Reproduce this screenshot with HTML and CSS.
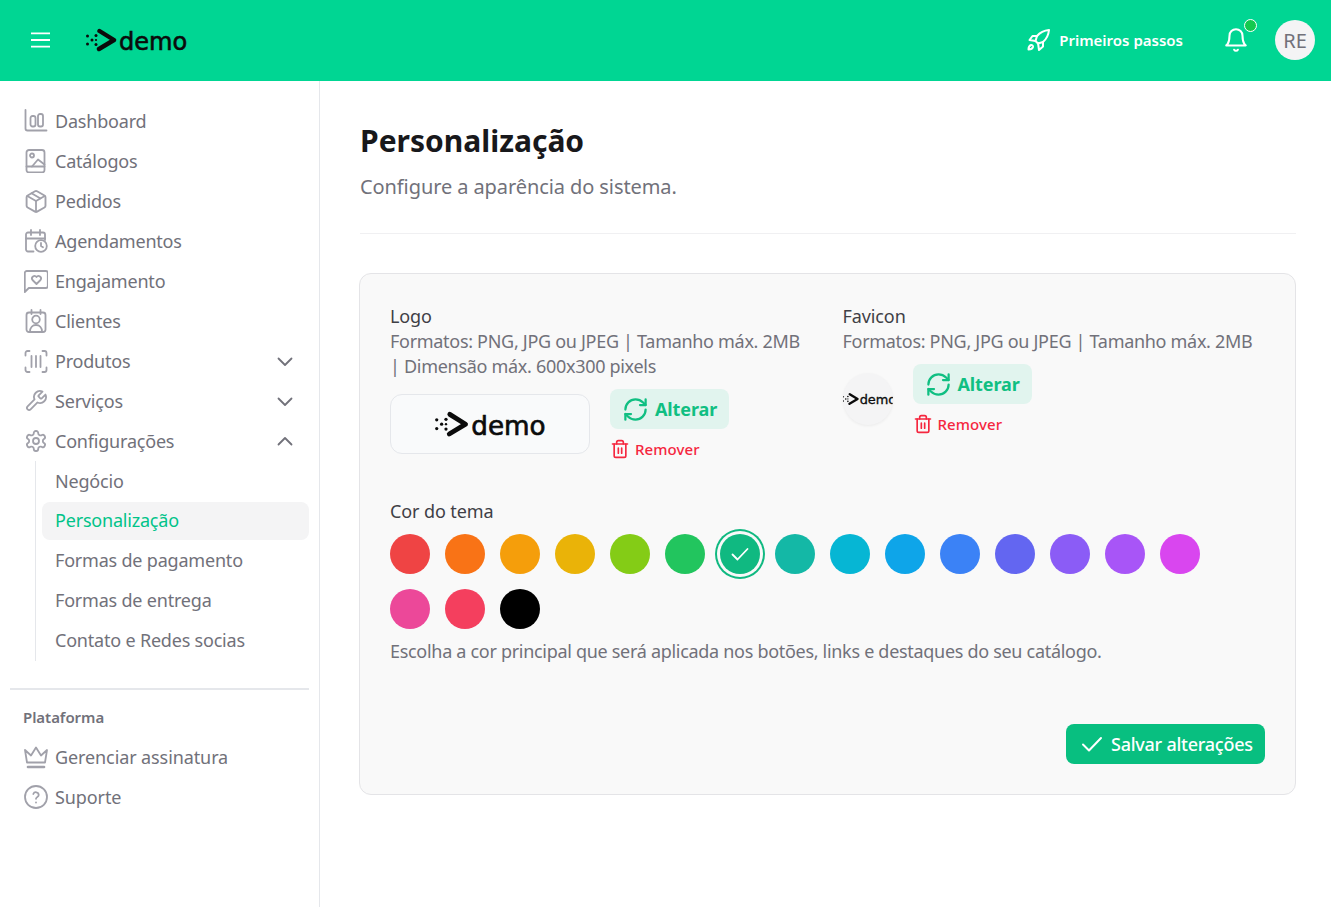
FILE: index.html
```html
<!DOCTYPE html>
<html lang="pt-BR">
<head>
<meta charset="utf-8">
<title>Personalização</title>
<link rel="stylesheet" href="styles.css">
</head>
<body>
<header class="topbar">
  <div class="top-left">
    <svg class="burger" viewBox="0 0 20 16"><path d="M0 1h20M0 8h20M0 15h20"/></svg>
    <span class="logo logo-head">
      <svg class="mark" viewBox="0 0 32 26"><g class="dots"><circle cx="2.500" cy="9" r="1.500"/><circle cx="2.500" cy="17" r="1.500"/><circle cx="7" cy="13" r="1.500"/><circle cx="11" cy="8.500" r="1.500"/><circle cx="11" cy="17.500" r="1.500"/><circle cx="11" cy="13" r="1.100"/></g><path class="chev" d="M14.500 4L29 13 14 22"/></svg><span class="word">demo</span>
    </span>
  </div>
  <div class="top-right">
    <a class="steps">
      <svg class="ic-rocket" viewBox="0 0 24 24"><path d="M22 2c-5 .5-9 2.500-12 6l-1.500 5 2.500 2.500 5-1.500c3.500-3 5.500-7 6-12z"/><path d="M10 8H5.500L2.500 12l6 1"/><path d="M16 14v4.500L12 22l-1-7"/><path d="M4 17c-1.500.5-2.500 2-2.500 4.500 2.500 0 4-1 4.500-2.500.3-1.200-1-2.300-2-2z"/></svg>
      <span>Primeiros passos</span>
    </a>
    <span class="bell">
      <svg class="ic-bell" viewBox="0 0 24 24"><path d="M6 8a6 6 0 0 1 12 0c0 7 3 9 3 9H3s3-2 3-9"/><path d="M10.300 21a1.940 1.940 0 0 0 3.400 0"/></svg>
      <i class="dot"></i>
    </span>
    <span class="avatar">RE</span>
  </div>
</header>

<div class="shell">
  <aside class="sidebar">
    <nav class="nav">
      <a class="item"><svg class="ic" viewBox="0 0 24 24"><path d="M1.500 1v18.500a2 2 0 0 0 2 2H22.500"/><rect x="6.500" y="7" width="5" height="10.500" rx="2"/><rect x="14" y="5" width="5" height="12.500" rx="2"/></svg><span>Dashboard</span></a>
      <a class="item"><svg class="ic" viewBox="0 0 24 24"><rect x="2.500" y="1" width="18" height="22.500" rx="2.500"/><circle cx="8" cy="6.500" r="2"/><path d="M2.500 17.500h18"/><path d="M8 17.500l6-7 6.500 5"/></svg><span>Catálogos</span></a>
      <a class="item"><svg class="ic" viewBox="0 0 24 24"><path d="M21 8a2 2 0 0 0-1-1.730l-7-4a2 2 0 0 0-2 0l-7 4A2 2 0 0 0 3 8v8a2 2 0 0 0 1 1.730l7 4a2 2 0 0 0 2 0l7-4A2 2 0 0 0 21 16Z" transform="translate(-12 -12) scale(1.050) translate(10.900 11.300)"/><path d="m3.300 7 8.700 5 8.700-5"/><path d="M12 22V12"/><path d="m7.500 4.270 9 5.150"/></svg><span>Pedidos</span></a>
      <a class="item"><svg class="ic" viewBox="0 0 24 24"><path d="M9.500 22.500H4a2 2 0 0 1-2-2V5.500a2 2 0 0 1 2-2h15a2 2 0 0 1 2 2V11"/><path d="M7 1v5M16 1v5M2 9.500h19"/><circle cx="17" cy="17" r="5.800"/><path d="M17 14v3l2 1.300"/></svg><span>Agendamentos</span></a>
      <a class="item"><svg class="ic" viewBox="0 0 24 24"><path d="M.8 23V4a2 2 0 0 1 2-2h19a2 2 0 0 1 2 2v13a2 2 0 0 1-2 2H4.800z"/><path d="M12.500 15l-4-4a2.400 2.400 0 0 1 4-3 2.400 2.400 0 0 1 4 3z"/></svg><span>Engajamento</span></a>
      <a class="item"><svg class="ic" viewBox="0 0 24 24"><rect x="2.500" y="3.500" width="19" height="19.500" rx="2.500"/><path d="M7.500 1v4M16.500 1v4"/><circle cx="12" cy="10.500" r="3.800"/><path d="M6 22.500c0-4 2.500-6.500 6-6.500s6 2.500 6 6.500"/></svg><span>Clientes</span></a>
      <a class="item"><svg class="ic" viewBox="0 0 24 24"><path d="M1.500 6.500V4a2 2 0 0 1 2-2h2M18.500 2h2a2 2 0 0 1 2 2v2.500M22.500 18.500V21a2 2 0 0 1-2 2h-2M5.500 23h-2a2 2 0 0 1-2-2v-2.500"/><path d="M7.500 7v11M12 7v11M16.500 7v11"/></svg><span>Produtos</span><svg class="chev-ic down" viewBox="0 0 16 10"><path d="M1.500 1.500L8 8l6.500-6.500"/></svg></a>
      <a class="item"><svg class="ic" viewBox="0 0 24 24"><path d="M14.700 6.300a1 1 0 0 0 0 1.400l1.600 1.600a1 1 0 0 0 1.400 0l3.770-3.770a6 6 0 0 1-7.940 7.940l-6.910 6.910a2.120 2.120 0 0 1-3-3l6.910-6.910a6 6 0 0 1 7.940-7.940l-3.760 3.760z"/></svg><span>Serviços</span><svg class="chev-ic down" viewBox="0 0 16 10"><path d="M1.500 1.500L8 8l6.500-6.500"/></svg></a>
      <a class="item"><svg class="ic" viewBox="0 0 24 24"><path d="M12.220 2h-.44a2 2 0 0 0-2 2v.18a2 2 0 0 1-1 1.730l-.43.25a2 2 0 0 1-2 0l-.15-.08a2 2 0 0 0-2.730.73l-.22.38a2 2 0 0 0 .73 2.730l.15.1a2 2 0 0 1 1 1.720v.51a2 2 0 0 1-1 1.740l-.15.09a2 2 0 0 0-.73 2.730l.22.38a2 2 0 0 0 2.730.73l.15-.08a2 2 0 0 1 2 0l.43.25a2 2 0 0 1 1 1.730V20a2 2 0 0 0 2 2h.44a2 2 0 0 0 2-2v-.18a2 2 0 0 1 1-1.730l.43-.25a2 2 0 0 1 2 0l.15.08a2 2 0 0 0 2.730-.73l.22-.39a2 2 0 0 0-.73-2.730l-.15-.08a2 2 0 0 1-1-1.740v-.5a2 2 0 0 1 1-1.740l.15-.09a2 2 0 0 0 .73-2.730l-.22-.38a2 2 0 0 0-2.730-.73l-.15.08a2 2 0 0 1-2 0l-.43-.25a2 2 0 0 1-1-1.730V4a2 2 0 0 0-2-2z"/><circle cx="12" cy="12" r="3"/></svg><span>Configurações</span><svg class="chev-ic" viewBox="0 0 16 10"><path d="M1.500 8.500L8 2l6.500 6.500"/></svg></a>
      <div class="sub">
        <a class="sub-item">Negócio</a>
        <a class="sub-item active">Personalização</a>
        <a class="sub-item">Formas de pagamento</a>
        <a class="sub-item">Formas de entrega</a>
        <a class="sub-item">Contato e Redes socias</a>
      </div>
    </nav>
    <hr class="side-rule">
    <p class="side-title">Plataforma</p>
    <nav class="nav">
      <a class="item"><svg class="ic" viewBox="0 0 24 24"><path d="M1 5l6 5.500L12 2.500l5 8L23 5l-2 12.500H3z"/><path d="M4 22h16" class="thick"/></svg><span>Gerenciar assinatura</span></a>
      <a class="item"><svg class="ic" viewBox="0 0 24 24"><circle cx="12" cy="12" r="11"/><path d="M9.300 9a2.800 2.800 0 0 1 5.400.9c0 1.900-2.700 2.500-2.700 3.900"/><path d="M12 17.500h.01"/></svg><span>Suporte</span></a>
    </nav>
  </aside>

  <main class="main">
    <h1 class="title">Personalização</h1>
    <p class="subtitle">Configure a aparência do sistema.</p>
    <hr class="main-rule">

    <section class="card">
      <div class="uploads">
        <div class="upload">
          <h2 class="label">Logo</h2>
          <p class="hint">Formatos: PNG, JPG ou JPEG | Tamanho máx. 2MB | Dimensão máx. 600x300 pixels</p>
          <div class="upload-row">
            <div class="logo-box">
              <span class="logo logo-card">
                <svg class="mark" viewBox="0 0 32 26"><g class="dots"><circle cx="2.500" cy="9" r="1.500"/><circle cx="2.500" cy="17" r="1.500"/><circle cx="7" cy="13" r="1.500"/><circle cx="11" cy="8.500" r="1.500"/><circle cx="11" cy="17.500" r="1.500"/><circle cx="11" cy="13" r="1.100"/></g><path class="chev" d="M14.500 4L29 13 14 22"/></svg><span class="word">demo</span>
              </span>
            </div>
            <div class="actions">
              <button class="btn-alt"><svg class="ic-refresh" viewBox="0 0 24 24"><path d="M3 12a9 9 0 0 1 9-9 9.750 9.750 0 0 1 6.740 2.740L21 8"/><path d="M21 3v5h-5"/><path d="M21 12a9 9 0 0 1-9 9 9.750 9.750 0 0 1-6.740-2.740L3 16"/><path d="M8 16H3v5"/></svg>Alterar</button>
              <button class="btn-rem"><svg class="ic-20" viewBox="0 0 24 24"><path d="M3 6h18"/><path d="M19 6v14a2 2 0 0 1-2 2H7a2 2 0 0 1-2-2V6"/><path d="M8 6V4c0-1 1-2 2-2h4c1 0 2 1 2 2v2"/><path d="M10 11v6M14 11v6"/></svg>Remover</button>
            </div>
          </div>
        </div>
        <div class="upload">
          <h2 class="label">Favicon</h2>
          <p class="hint">Formatos: PNG, JPG ou JPEG | Tamanho máx. 2MB</p>
          <div class="upload-row">
            <div class="fav-box">
              <span class="logo logo-fav">
                <svg class="mark" viewBox="0 0 32 26"><g class="dots"><circle cx="2.500" cy="9" r="1.500"/><circle cx="2.500" cy="17" r="1.500"/><circle cx="7" cy="13" r="1.500"/><circle cx="11" cy="8.500" r="1.500"/><circle cx="11" cy="17.500" r="1.500"/><circle cx="11" cy="13" r="1.100"/></g><path class="chev" d="M14.500 4L29 13 14 22"/></svg><span class="word">demo</span>
              </span>
            </div>
            <div class="actions">
              <button class="btn-alt"><svg class="ic-refresh" viewBox="0 0 24 24"><path d="M3 12a9 9 0 0 1 9-9 9.750 9.750 0 0 1 6.740 2.740L21 8"/><path d="M21 3v5h-5"/><path d="M21 12a9 9 0 0 1-9 9 9.750 9.750 0 0 1-6.740-2.740L3 16"/><path d="M8 16H3v5"/></svg>Alterar</button>
              <button class="btn-rem"><svg class="ic-20" viewBox="0 0 24 24"><path d="M3 6h18"/><path d="M19 6v14a2 2 0 0 1-2 2H7a2 2 0 0 1-2-2V6"/><path d="M8 6V4c0-1 1-2 2-2h4c1 0 2 1 2 2v2"/><path d="M10 11v6M14 11v6"/></svg>Remover</button>
            </div>
          </div>
        </div>
      </div>

      <h2 class="label theme-label">Cor do tema</h2>
      <div class="swatches">
        <span class="sw c1"></span><span class="sw c2"></span><span class="sw c3"></span><span class="sw c4"></span><span class="sw c5"></span><span class="sw c6"></span>
        <span class="sw c7 selected"><svg viewBox="0 0 20 20"><path d="M2.500 10.500l5 5L17.500 5"/></svg></span>
        <span class="sw c8"></span><span class="sw c9"></span><span class="sw c10"></span><span class="sw c11"></span><span class="sw c12"></span><span class="sw c13"></span><span class="sw c14"></span><span class="sw c15"></span><span class="sw c16"></span><span class="sw c17"></span><span class="sw c18"></span>
      </div>
      <p class="hint theme-hint">Escolha a cor principal que será aplicada nos botões, links e destaques do seu catálogo.</p>

      <div class="save-row">
        <button class="btn-save"><svg class="ic-24" viewBox="0 0 24 24"><path d="M3 12.500l6 6L21 6"/></svg>Salvar alterações</button>
      </div>
    </section>
  </main>
</div>
</body>
</html>
```
FILE: styles.css
```css
* { box-sizing: border-box; }
html, body { margin: 0; height: 100%; }
body {
  font-family: "Noto Sans", "Open Sans", sans-serif;
  font-size: 18px;
  line-height: 25px;
  color: #71717a;
  background: #fff;
  overflow: hidden;
}
svg { fill: none; stroke: currentColor; stroke-linecap: round; stroke-linejoin: round; flex: none; display: block; }
p, h1, h2 { margin: 0; }
button { font: inherit; border: 0; background: none; padding: 0; }

.topbar {
  height: 81px;
  background: #00d693;
  display: flex;
  align-items: center;
  justify-content: space-between;
  padding: 0 16px 1px 31px;
  color: #fff;
}
.top-left { display: flex; align-items: center; gap: 35px; }
.burger { width: 19px; height: 16px; stroke-width: 2; }
.top-right { display: flex; align-items: center; }
.steps { display: flex; align-items: center; gap: 8px; font-size: 15px; font-weight: 600; margin-right: 40px; }
.ic-rocket { width: 24px; height: 24px; stroke-width: 2; }
.ic-bell { width: 26px; height: 26px; stroke-width: 1.9; }
.ic-24 { width: 24px; height: 24px; stroke-width: 2; }
.ic-20 { width: 20px; height: 20px; stroke-width: 2; }
.ic-refresh { width: 27px; height: 27px; stroke-width: 2; }
.bell { position: relative; display: block; margin-right: 26px; }
.dot {
  position: absolute; top: -8px; right: -8px;
  width: 13px; height: 13px; border-radius: 50%;
  background: #14c94f; border: 1.5px solid #fff;
}
.avatar {
  width: 40px; height: 40px; border-radius: 50%;
  background: #f4f4f5; color: #71717a;
  display: flex; align-items: center; justify-content: center;
  font-size: 20px;
}

.logo { display: inline-flex; align-items: center; color: #0b0b0b; white-space: nowrap; }
.mark { width: 1.143em; height: .929em; }
.mark .dots { fill: currentColor; stroke: none; }
.mark .chev { stroke-width: 4.4; }
.word {
  font-family: "DejaVu Sans", "Noto Sans", sans-serif;
  font-size: .86em; line-height: 1;
  margin: .17em 0 0 .08em;
  -webkit-text-stroke: .025em currentColor;
}
.logo-head { font-size: 28px; }
.logo-card { font-size: 30.500px; }
.logo-fav { font-size: 15px; margin-left: -1px; }

.shell { display: flex; height: calc(100vh - 81px); }
.sidebar {
  width: 320px; flex: none;
  border-right: 1px solid #e5e7eb;
  padding: 20px 10px 0;
}
.nav { display: flex; flex-direction: column; letter-spacing: -.2px; }
.item {
  height: 40px;
  display: flex; align-items: center;
  padding-left: 14px;
}
.item span { margin-left: 7px; }
.ic { width: 24px; height: 24px; stroke-width: 1.8; color: #a1a1aa; }
.thick { stroke-width: 2.6; }
.chev-ic { width: 16px; height: 10px; stroke-width: 1.8; margin-left: auto; margin-right: 16px; color: #71717a; }
.chev-ic.down { margin-top: 2px; }
.sub { margin-left: 25px; border-left: 1px solid #e5e7eb; display: flex; flex-direction: column; padding: 0 0 1px 6px; }
.sub-item {
  height: 40px;
  display: flex; align-items: center;
  padding-left: 13px; border-radius: 8px;
}
.sub-item.active { height: 38px; margin-top: 1px; padding-bottom: 1px; background: #f4f4f5; color: #00c389; }
.side-rule { border: 0; height: 2px; background: #e5e7eb; margin: 27px 0 0; }
.side-title { font-size: 15px; font-weight: 600; line-height: 20px; margin: 17px 0 0 13px; letter-spacing: -.05px; }
.side-title + .nav { margin-top: 10px; letter-spacing: -.1px; }

.main { flex: 1; min-width: 0; padding: 40px 35px 0 40px; }
.title { font-size: 30px; line-height: 40px; font-weight: 700; color: #18181b; }
.subtitle { font-size: 20px; line-height: 28px; margin-top: 12px; letter-spacing: -.09px; }
.main-rule { border: 0; height: 1px; background: #f0f0f2; margin: 32px 0 39px; }

.card {
  margin-left: -1px;
  background: #f9f9f9;
  border: 1px solid #e4e4e7;
  border-radius: 12px;
  padding: 30px;
  height: 522px;
}
.uploads { display: grid; grid-template-columns: 1fr 1fr; column-gap: 30px; height: 185px; }
.label { font-size: 18px; line-height: 25px; font-weight: 400; color: #3f3f46; letter-spacing: -.1px; }
.hint { letter-spacing: -.3px; }
.upload-row { display: flex; align-items: center; gap: 20px; margin-top: 10px; }
.logo-box {
  width: 200px; height: 60px; flex: none;
  background: #f9fafb; border: 1px solid #e5e7eb; border-radius: 12px;
  display: flex; align-items: center; justify-content: center;
}
.fav-box {
  width: 50px; height: 52px; flex: none; border-radius: 50%;
  background: #f4f4f5; overflow: hidden;
  display: flex; align-items: center;
  box-shadow: 0 1px 3px rgba(0,0,0,.06);
}
.actions { display: flex; flex-direction: column; align-items: flex-start; gap: 10px; }
.btn-alt {
  height: 40px; width: 119px; padding-left: 12px;
  display: flex; align-items: center; gap: 6px;
  background: #e1f4ee; color: #10bf82; font-weight: 700; border-radius: 8px; letter-spacing: -.1px;
}
.btn-rem {
  height: 20px; display: flex; align-items: center; gap: 5px;
  color: #f5273f; font-size: 15px; font-weight: 500; line-height: 20px; letter-spacing: .1px;
}
.theme-label { margin-top: 10px; }
.swatches { display: flex; flex-wrap: wrap; gap: 15px; max-width: 830px; margin-top: 10px; }
.sw { width: 40px; height: 40px; border-radius: 50%; display: flex; align-items: center; justify-content: center; }
.sw svg { width: 20px; height: 20px; color: #fff; stroke-width: 1.8; }
.selected { box-shadow: 0 0 0 3px #f9f9f9, 0 0 0 5px #10b981; }
.c1 { background: #ef4444; } .c2 { background: #f97316; } .c3 { background: #f59e0b; }
.c4 { background: #eab308; } .c5 { background: #84cc16; } .c6 { background: #22c55e; }
.c7 { background: #10b981; } .c8 { background: #14b8a6; } .c9 { background: #06b6d4; }
.c10 { background: #0ea5e9; } .c11 { background: #3b82f6; } .c12 { background: #6366f1; }
.c13 { background: #8b5cf6; } .c14 { background: #a855f7; } .c15 { background: #d946ef; }
.c16 { background: #ec4899; } .c17 { background: #f43f5e; } .c18 { background: #000; }
.theme-hint { margin-top: 10px; }
.save-row { display: flex; justify-content: flex-end; margin-top: 60px; }
.btn-save {
  width: 199px; height: 40px; padding-left: 14px;
  display: flex; align-items: center; gap: 7px;
  background: #08bf80; color: #fff; font-weight: 500; border-radius: 8px; letter-spacing: -.25px;
}
```
